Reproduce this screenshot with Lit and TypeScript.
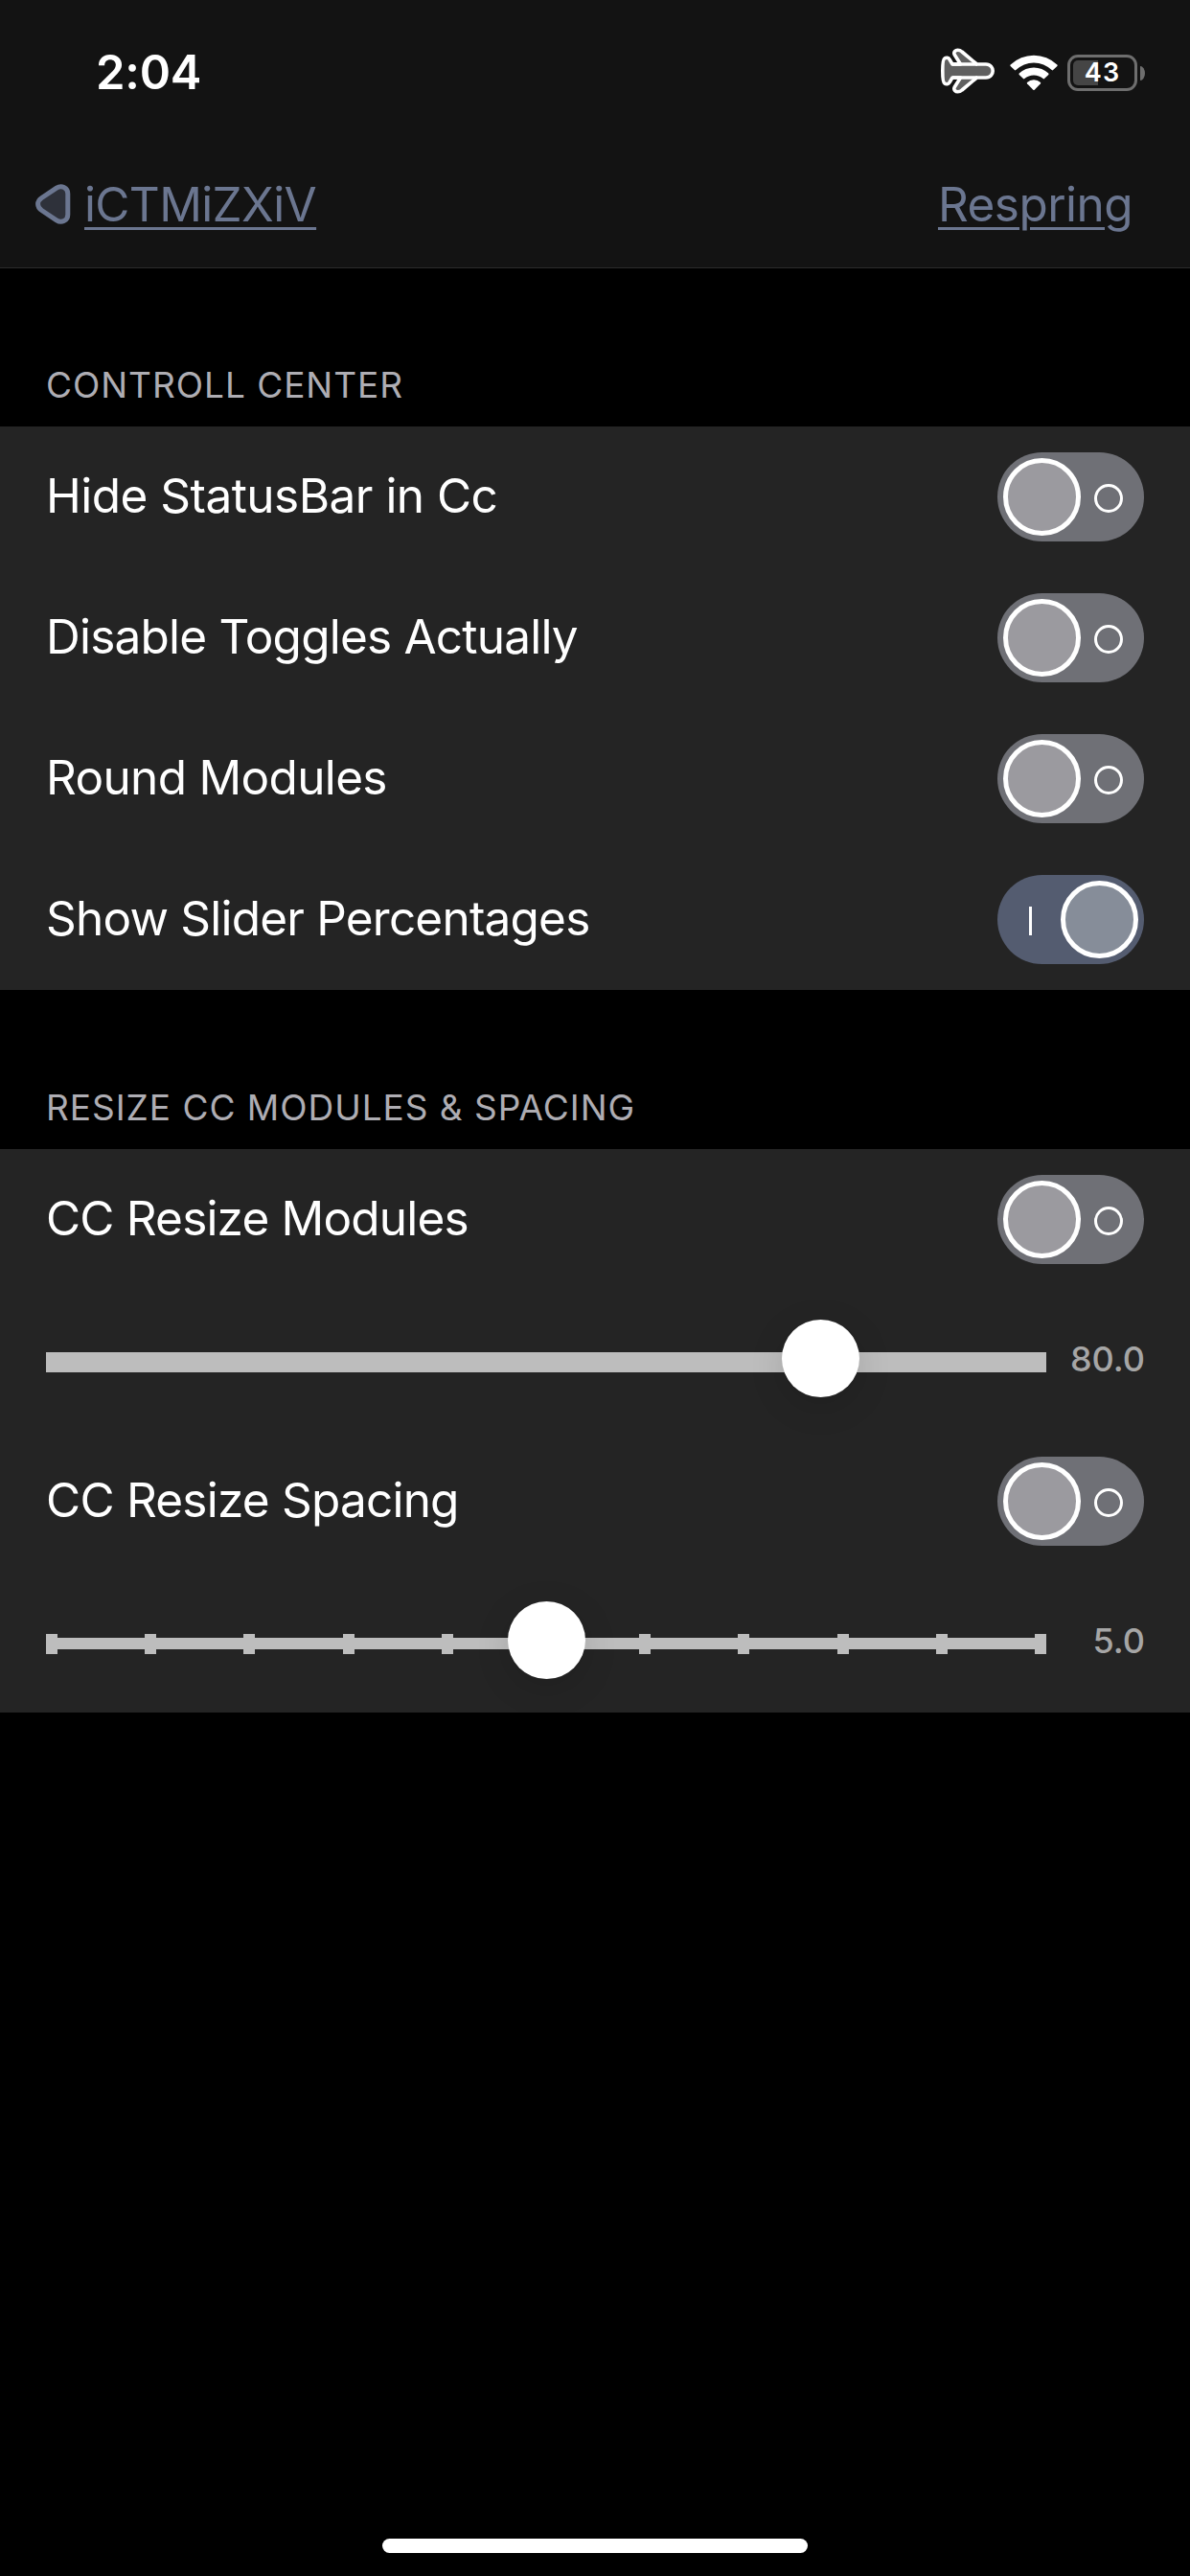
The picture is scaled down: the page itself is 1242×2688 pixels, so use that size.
import { LitElement, html, css, nothing } from "lit";
import { customElement, property } from "lit/decorators.js";
import { classMap } from "lit/directives/class-map.js";

@customElement("toggle-switch")
class ToggleSwitch extends LitElement {
  @property({ type: Boolean }) on = false;

  static styles = css`
    :host { display: block; flex: none; }
    .pill {
      box-sizing: border-box;
      display: flex;
      align-items: center;
      justify-content: space-between;
      width: 153px;
      height: 93px;
      padding: 0 22px 0 6px;
      border-radius: 47px;
      background: #6f7076;
    }
    .pill.on { flex-direction: row-reverse; padding: 0 6px 0 33px; background: #545c70; }
    .knob {
      box-sizing: border-box;
      width: 81px;
      height: 81px;
      border: 5px solid #fff;
      border-radius: 50%;
      background: #9b9a9f;
    }
    .on .knob { background: #868d99; }
    .mark {
      box-sizing: border-box;
      width: 30px;
      height: 30px;
      margin-top: 3px;
      border: 3px solid #fff;
      border-radius: 50%;
    }
    .on .mark { width: 3px; border: 0; border-radius: 0; background: #fff; }
  `;

  render() {
    return html`<div class=${classMap({ pill: true, on: this.on })}>
      <div class="knob"></div><div class="mark"></div>
    </div>`;
  }
}

@customElement("value-slider")
class ValueSlider extends LitElement {
  @property({ type: Number }) value = 0;
  @property({ type: Number }) max = 100;
  @property({ type: Number }) steps = 0;

  static styles = css`
    :host { display: flex; align-items: center; justify-content: space-between; width: 100%; height: 100%; }
    .slider { position: relative; display: grid; align-items: center; width: 1044px; height: 21px; margin-top: 4px; }
    .rail { grid-area: 1 / 1; height: 21px; background: #bdbdbd; }
    .rail.thin { height: 12px; margin-bottom: 1px; }
    .ticks { grid-area: 1 / 1; display: flex; justify-content: space-between; }
    .tick { width: 12px; height: 21px; background: #bdbdbd; }
    .thumb {
      position: absolute;
      top: -34px;
      width: 81px;
      height: 81px;
      border-radius: 50%;
      background: #fff;
      box-shadow: 0 9px 36px rgba(0, 0, 0, 0.13);
    }
    .value {
      padding-bottom: 3px;
      font-size: 36px;
      font-weight: 550;
      line-height: 44px;
      color: #a6a6a6;
      margin-right: -1px;
    }
  `;

  render() {
    const left = (this.value / this.max) * (1044 - 81);
    return html`
      <div class="slider">
        <div class=${classMap({ rail: true, thin: this.steps > 0 })}></div>
        ${this.steps
          ? html`<div class="ticks">${Array.from({ length: this.steps + 1 }, () => html`<div class="tick"></div>`)}</div>`
          : nothing}
        <div class="thumb" style="left:${left}px"></div>
      </div>
      <div class="value">${this.value.toFixed(1)}</div>
    `;
  }
}

type Row =
  | { kind: "switch"; label: string; on: boolean; tracking: number }
  | { kind: "slider"; value: number; max: number; steps: number };

const sections: { title: string; rows: Row[] }[] = [
  {
    title: "CONTROLL CENTER",
    rows: [
      { kind: "switch", label: "Hide StatusBar in Cc", on: false, tracking: -0.52 },
      { kind: "switch", label: "Disable Toggles Actually", on: false, tracking: -0.79 },
      { kind: "switch", label: "Round Modules", on: false, tracking: -0.67 },
      { kind: "switch", label: "Show Slider Percentages", on: true, tracking: -0.79 },
    ],
  },
  {
    title: "RESIZE CC MODULES & SPACING",
    rows: [
      { kind: "switch", label: "CC Resize Modules", on: false, tracking: -0.82 },
      { kind: "slider", value: 80, max: 100.3, steps: 0 },
      { kind: "switch", label: "CC Resize Spacing", on: false, tracking: -0.78 },
      { kind: "slider", value: 5, max: 10, steps: 10 },
    ],
  },
];

@customElement("app-root")
class AppRoot extends LitElement {
  static styles = css`
    :host { display: block; }
    .screen {
      display: flex;
      flex-direction: column;
      width: 1242px;
      height: 2688px;
      overflow: hidden;
      background: #000;
      color: #fff;
      font-family: Inter, "Liberation Sans", sans-serif;
    }
    .top { flex: none; box-sizing: border-box; height: 280px; background: #131313; border-bottom: 1px solid #2b2b2b; }
    .status {
      box-sizing: border-box;
      display: flex;
      align-items: center;
      height: 152px;
      padding: 0 47px 0 100px;
    }
    .time { margin-right: auto; font-size: 49px; font-weight: 600; letter-spacing: -0.25px; line-height: 60px; }
    .plane { width: 57px; height: 48px; margin: 0 14.5px 4px 0; }
    .wifi { width: 50px; height: 38px; margin-right: 10.5px; }
    .battery {
      position: relative;
      box-sizing: border-box;
      display: flex;
      align-items: center;
      justify-content: center;
      width: 73px;
      height: 38px;
      border: 3px solid #6e6e6e;
      border-radius: 11px;
    }
    .charge {
      position: absolute;
      left: 3px;
      top: 3px;
      width: 26px;
      height: 26px;
      border-radius: 5px 0 0 5px;
      background: #454545;
    }
    .percent { position: relative; font-size: 27px; font-weight: 600; letter-spacing: 1.2px; line-height: 32px; }
    .nub { width: 5px; height: 15px; margin-left: 3px; border-radius: 0 5px 5px 0 / 0 7.5px 7.5px 0; background: #6e6e6e; }
    .nav {
      box-sizing: border-box;
      display: flex;
      align-items: center;
      height: 122px;
      padding: 0 60px 0 36.5px;
      color: #6b7690;
      font-size: 49.5px;
      line-height: 60px;
    }
    .back { width: 37px; height: 42px; margin-right: 14.5px; }
    .link {
      text-decoration: underline;
      text-decoration-thickness: 3px;
      text-underline-offset: 6px;
      letter-spacing: -0.64px;
      margin-bottom: 1px;
    }
    .action { margin-left: auto; letter-spacing: -0.55px; }
    .title {
      box-sizing: border-box;
      flex: none;
      display: flex;
      align-items: flex-end;
      height: 165px;
      padding: 0 48px 25px;
      color: #aeadb3;
      font-size: 37px;
      line-height: 37px;
      letter-spacing: 0.97px;
    }
    .section + .section .title { height: 166px; }
    .list { background: #242424; }
    .row {
      box-sizing: border-box;
      display: flex;
      align-items: center;
      justify-content: space-between;
      height: 147px;
      padding: 0 48px;
      font-size: 49.5px;
      line-height: 60px;
    }
    .label { padding-bottom: 3px; }
    .home { width: 444px; height: 15px; margin: auto auto 24px; border-radius: 8px; background: #fff; }
  `;

  private row(r: Row) {
    return html`<div class="row">
      ${r.kind === "switch"
        ? html`<span class="label" style="letter-spacing:${r.tracking}px">${r.label}</span>
            <toggle-switch ?on=${r.on}></toggle-switch>`
        : html`<value-slider .value=${r.value} .max=${r.max} .steps=${r.steps}></value-slider>`}
    </div>`;
  }

  render() {
    return html`<div class="screen">
      <div class="top">
        <div class="status">
          <span class="time">2:04</span>
          <svg class="plane" viewBox="0 0 57 48" stroke="#fff" stroke-width="3.6" stroke-linejoin="round">
            <path
              fill="#606060"
              d="M1.8 24C1.8 18 2 12 3.8 11C5.5 9.8 8 10 9 12L12 17H20.5L14.2 7C12.8 4 15.5 2.2 17.5 2.2C19.5 2.2 20.5 2.6 22 4L37.5 17H47C52 17 54.2 21 54.2 24C54.2 27 52 31 47 31H37.5L22 44C20.5 45.4 19.5 45.8 17.5 45.8C15.5 45.8 12.8 44 14.2 41L20.5 31H12L9 36C8 38 5.5 38.2 3.8 37C2 36 1.8 30 1.8 24Z"
            />
            <path fill="none" d="M12 17H38M12 31H38" />
          </svg>
          <svg class="wifi" viewBox="0 0 50 38" fill="#fff">
            <path d="M.6 11.9A1 1 0 0 1 .7 10.5A35 35 0 0 1 49.3 10.5A1 1 0 0 1 49.4 11.9L45.1 16.1A1 1 0 0 1 43.7 16.1A26.5 26.5 0 0 0 6.3 16.1A1 1 0 0 1 4.9 16.1Z" />
            <path d="M9.7 20.9A1 1 0 0 1 9.7 19.6A22 22 0 0 1 40.3 19.6A1 1 0 0 1 40.3 20.9L36 25.1A1 1 0 0 1 34.7 25.1A14.5 14.5 0 0 0 15.3 25.1A1 1 0 0 1 14 25.1Z" />
            <path d="M18 30.2A1 1 0 0 1 18 28.9A10.5 10.5 0 0 1 32 28.9A1 1 0 0 1 32 30.2L25.7 36.7A1 1 0 0 1 24.3 36.7Z" />
          </svg>
          <div class="battery"><div class="charge"></div><span class="percent">43</span></div>
          <div class="nub"></div>
        </div>
        <div class="nav">
          <svg class="back" viewBox="0 0 37 42">
            <path
              fill="#2e313a"
              stroke="#6b7690"
              stroke-width="5"
              d="M22 4.2C27 1 33.8 3.5 33.8 10V32C33.8 38.5 27 41 22 37.8L6.5 27.5C1.3 24 1.3 18 6.5 14.5Z"
            />
          </svg>
          <span class="link">iCTMiZXiV</span>
          <span class="link action">Respring</span>
        </div>
      </div>
      ${sections.map(
        (s) => html`<div class="section">
          <div class="title">${s.title}</div>
          <div class="list">${s.rows.map((r) => this.row(r))}</div>
        </div>`
      )}
      <div class="home"></div>
    </div>`;
  }
}
